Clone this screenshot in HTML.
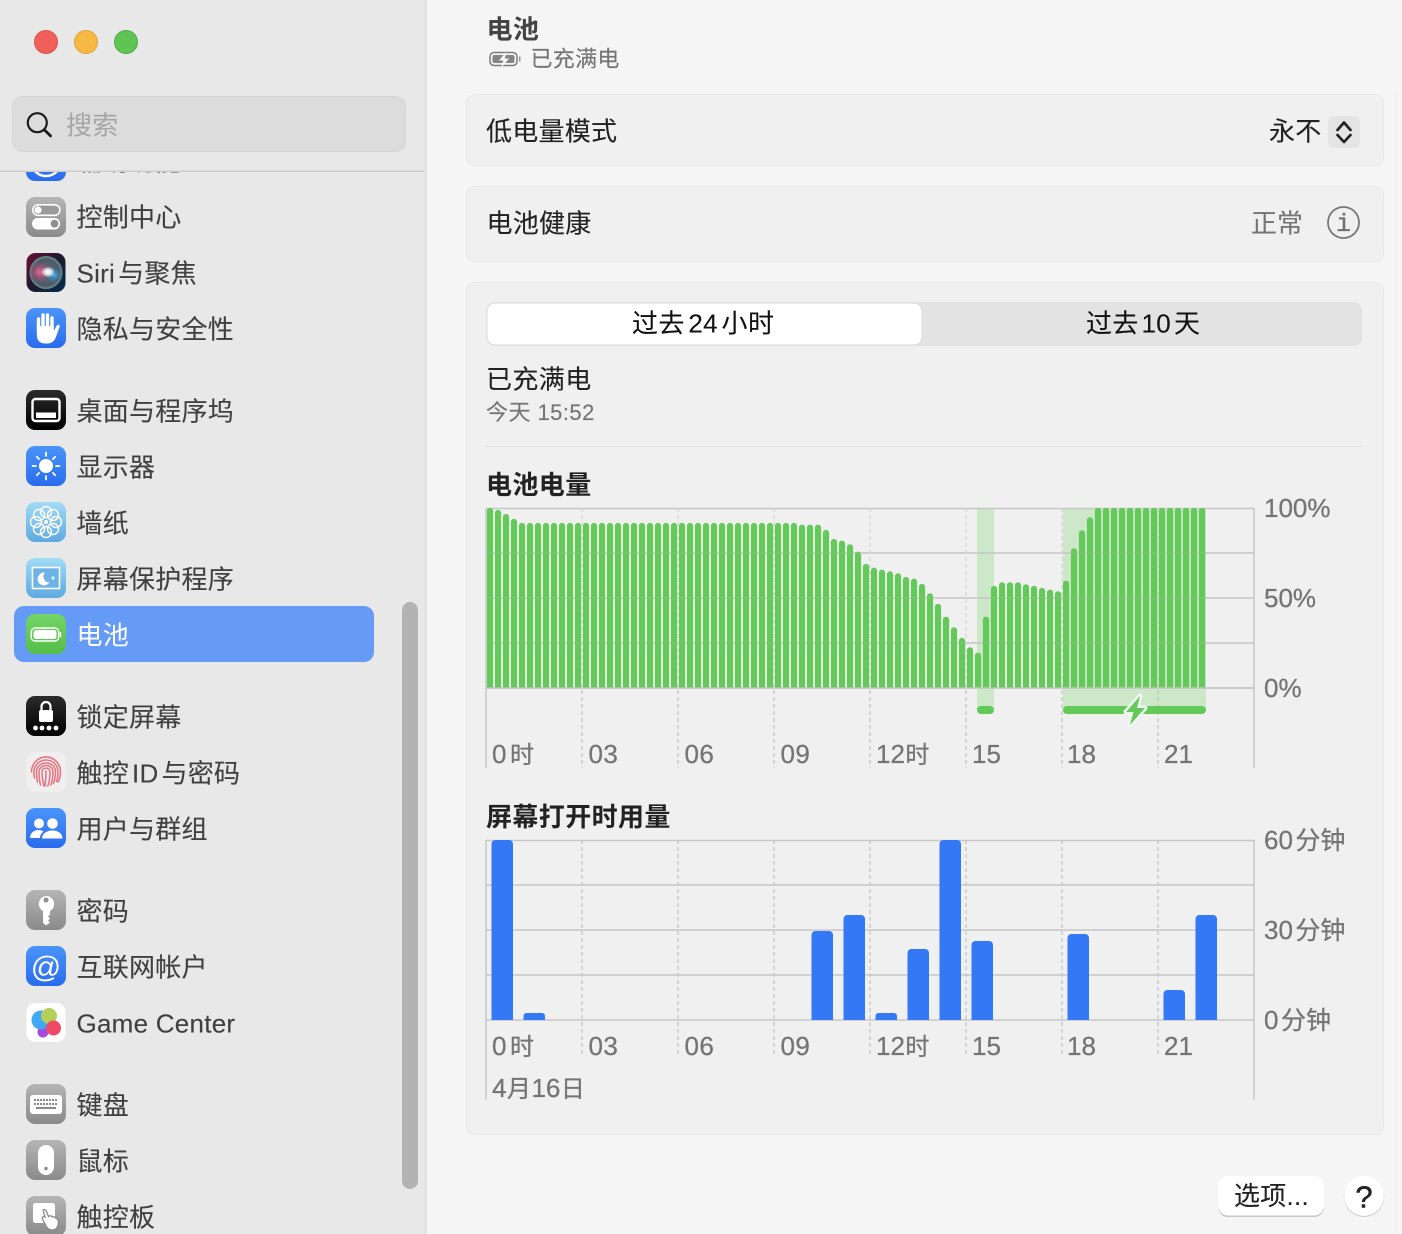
<!DOCTYPE html>
<html lang="zh-CN">
<head>
<meta charset="utf-8">
<title>电池</title>
<style>
html,body{margin:0;padding:0;background:#f5f5f5;width:1402px;height:1234px;overflow:hidden}
svg{display:block;font-family:"Liberation Sans","Noto Sans CJK SC",sans-serif}
text{font-size:26px}
.s{fill:#404040;stroke:#404040;stroke-width:.12;letter-spacing:.25px}
.m{fill:#222;stroke:#222;stroke-width:.12;letter-spacing:.25px}
.g{fill:#757575;stroke:#757575;stroke-width:.3}
.n{letter-spacing:.4px}
.c{font-size:24px}
.k{font-size:25px}
.b{font-weight:700;letter-spacing:.4px}
.sm{font-size:22px;letter-spacing:.3px;stroke-width:.15}
</style>
</head>
<body>
<svg width="1402" height="1234" viewBox="0 0 1402 1234" xmlns="http://www.w3.org/2000/svg">
<defs>
<linearGradient id="gray" x1="0" y1="0" x2="0" y2="1"><stop offset="0" stop-color="#b5b5b5"/><stop offset="1" stop-color="#8a8a8a"/></linearGradient>
<linearGradient id="blue" x1="0" y1="0" x2="0" y2="1"><stop offset="0" stop-color="#4a94f9"/><stop offset="1" stop-color="#2a6bee"/></linearGradient>
<linearGradient id="sky" x1="0" y1="0" x2="0" y2="1"><stop offset="0" stop-color="#a2dcf6"/><stop offset="1" stop-color="#5ea9e0"/></linearGradient>
<linearGradient id="grn" x1="0" y1="0" x2="0" y2="1"><stop offset="0" stop-color="#74d566"/><stop offset="1" stop-color="#55bd49"/></linearGradient>
<linearGradient id="blk" x1="0" y1="0" x2="0" y2="1"><stop offset="0" stop-color="#2b2b2b"/><stop offset="1" stop-color="#000"/></linearGradient>
<linearGradient id="siri" x1="0" y1="0" x2="1" y2="1"><stop offset="0" stop-color="#6b0f35"/><stop offset=".5" stop-color="#1c1a2e"/><stop offset="1" stop-color="#06304f"/></linearGradient>
<radialGradient id="orb" cx=".5" cy=".5" r=".5"><stop offset="0" stop-color="#6c6c80"/><stop offset=".8" stop-color="#4a5a66"/><stop offset="1" stop-color="#71908a"/></radialGradient>
<radialGradient id="pk" cx=".5" cy=".5" r=".5"><stop offset="0" stop-color="#f06a9c" stop-opacity=".95"/><stop offset="1" stop-color="#b83068" stop-opacity="0"/></radialGradient>
<radialGradient id="bl" cx=".5" cy=".5" r=".5"><stop offset="0" stop-color="#49b4ee" stop-opacity=".95"/><stop offset="1" stop-color="#2a6fa8" stop-opacity="0"/></radialGradient>
<radialGradient id="wh" cx=".5" cy=".5" r=".5"><stop offset="0" stop-color="#fff"/><stop offset=".5" stop-color="#fff" stop-opacity=".8"/><stop offset="1" stop-color="#fff" stop-opacity="0"/></radialGradient>
<clipPath id="c1"><rect x="486" y="508" width="768" height="180"/></clipPath>
<clipPath id="listclip"><rect x="0" y="172" width="425" height="1062"/></clipPath>
</defs>

<!-- backgrounds -->
<rect width="1402" height="1234" fill="#f5f5f5"/>
<rect width="425" height="1234" fill="#e8e8e8"/>
<rect x="425" y="0" width="2" height="1234" fill="#e0e0e0"/>
<rect x="1395" y="94" width="1" height="1140" fill="#ececec"/>

<!-- sidebar list -->
<g clip-path="url(#listclip)">
<rect x="14" y="606" width="360" height="56" rx="10" fill="#659af6"/>

<!-- accessibility (clipped) -->
<rect x="26" y="141" width="40" height="40" rx="9" fill="url(#blue)"/>
<circle cx="46" cy="161" r="15" fill="none" stroke="#fff" stroke-width="2.5"/>
<text x="76.500" y="170.500" class="s">辅助功能</text>

<!-- control centre -->
<rect x="26" y="197" width="40" height="40" rx="9" fill="url(#gray)"/>
<rect x="32.800" y="204.800" width="27" height="10.500" rx="5.200" fill="#9a9a9a" stroke="#fff" stroke-width="1.600"/>
<circle cx="38" cy="210" r="3.600" fill="#fff"/>
<rect x="32" y="218" width="28" height="11.500" rx="5.700" fill="#fff"/>
<circle cx="54.500" cy="223.700" r="3.900" fill="#8e8e8e"/>
<text x="76.500" y="226.500" class="s">控制中心</text>

<!-- siri -->
<rect x="26.500" y="253" width="39" height="39" rx="9" fill="url(#siri)"/>
<circle cx="46" cy="272.500" r="16.500" fill="url(#orb)"/>
<ellipse cx="39.500" cy="272" rx="11" ry="11" fill="url(#pk)"/>
<ellipse cx="54" cy="275" rx="9.500" ry="9" fill="url(#bl)"/>
<ellipse cx="48" cy="272" rx="7" ry="5.500" fill="url(#wh)"/>
<text x="76.500" y="282.500" class="s">Siri<tspan dx="3">与聚焦</tspan></text>

<!-- privacy hand -->
<rect x="26" y="308" width="40" height="40" rx="9" fill="url(#blue)"/>
<path d="M38.500 328V319M43 327V315M47.500 327V315M52 328V318" stroke="#fff" stroke-width="3.400" stroke-linecap="round" fill="none"/>
<path d="M36.800 326h17v5l3-5.500c1-1.700 3.500-.5 2.800 1.400l-3.500 9.600c-1.500 4.500-4.500 7-9 7h-2c-5.500 0-8.300-3.500-8.300-9z" fill="#fff"/>
<text x="76.500" y="338.500" class="s">隐私与安全性</text>

<!-- desktop & dock -->
<rect x="26" y="390" width="40" height="40" rx="9" fill="url(#blk)"/>
<rect x="32.500" y="399" width="27" height="22" rx="3" fill="none" stroke="#fff" stroke-width="2.400"/>
<rect x="36" y="412.500" width="20" height="5.500" fill="#fff"/>
<text x="76.500" y="420.500" class="s">桌面与程序坞</text>

<!-- displays -->
<rect x="26" y="446" width="40" height="40" rx="9" fill="url(#blue)"/>
<circle cx="46" cy="466" r="7" fill="#fff"/>
<path d="M46 452.500v3.500M46 476v3.500M32.500 466h3.500M56 466h3.500M36.800 456.800l2.200 2.200M53 473l2.200 2.200M36.800 475.200l2.200-2.200M53 459l2.200-2.200" stroke="#fff" stroke-width="1.800" stroke-linecap="round"/>
<text x="76.500" y="476.500" class="s">显示器</text>

<!-- wallpaper -->
<rect x="26" y="502" width="40" height="40" rx="9" fill="url(#sky)"/>
<g fill="none" stroke="#fff" stroke-width="1.500">
<circle cx="46" cy="512" r="5.500"/><circle cx="46" cy="532" r="5.500"/><circle cx="36" cy="522" r="5.500"/><circle cx="56" cy="522" r="5.500"/>
<circle cx="39" cy="515" r="5.500"/><circle cx="53" cy="515" r="5.500"/><circle cx="39" cy="529" r="5.500"/><circle cx="53" cy="529" r="5.500"/>
</g>
<circle cx="46" cy="522" r="2" fill="#fff"/>
<text x="76.500" y="532.500" class="s">墙纸</text>

<!-- screensaver -->
<rect x="26" y="558" width="40" height="40" rx="9" fill="url(#sky)"/>
<rect x="32.500" y="567.500" width="27" height="21" fill="#6db3e6" stroke="#fff" stroke-width="1.600"/>
<path d="M45 572.500a6.500 6.500 0 1 0 4.500 10a6 6 0 0 1-4.500-10z" fill="#fff"/>
<path d="M53 576v4M51 578h4" stroke="#fff" stroke-width="1"/>
<text x="76.500" y="588.500" class="s">屏幕保护程序</text>

<!-- battery -->
<rect x="26" y="614" width="40" height="40" rx="9" fill="url(#grn)"/>
<rect x="31.200" y="628" width="27.500" height="13" rx="4" fill="none" stroke="#fff" stroke-width="1.400"/>
<rect x="33.500" y="630" width="23" height="9" rx="2.500" fill="#fff"/>
<path d="M60.500 632.500v4" stroke="#fff" stroke-width="1.500" stroke-linecap="round"/>
<text x="76.500" y="644.500" fill="#fff" style="letter-spacing:.25px">电池</text>

<!-- lock screen -->
<rect x="26" y="696" width="40" height="40" rx="9" fill="url(#blk)"/>
<path d="M41.500 711v-4.500a4.500 4.500 0 0 1 9 0V711" fill="none" stroke="#fff" stroke-width="2.200"/>
<rect x="39" y="710" width="14" height="12" rx="2" fill="#fff"/>
<circle cx="35.500" cy="728" r="2.400" fill="#fff"/><circle cx="42" cy="728" r="2.400" fill="#fff"/><circle cx="49" cy="728" r="2.400" fill="#fff"/><circle cx="56" cy="728" r="2.400" fill="#fff"/>
<text x="76.500" y="726.500" class="s">锁定屏幕</text>

<!-- touch id -->
<rect x="26" y="752" width="40" height="40" rx="9" fill="#f0eeee"/>
<g fill="none" stroke="#e8707f" stroke-width="1.500" stroke-linecap="round">
<path d="M31.500 772c0-8 6-15 14.500-15s14.500 7 14.500 15c0 5-1 8-2.500 10"/>
<path d="M34.500 778c-.5-2-.5-4-.5-6c0-6.500 5-12 12-12s12 5.500 12 12c0 3.500-.5 7-1.500 9.500"/>
<path d="M37.500 782c-.7-3-1-6-1-10c0-5 4-9 9.500-9s9.500 4 9.500 9c0 4-.7 8-2 11.500"/>
<path d="M40.500 785c-1-4-1.500-8-1.500-13c0-3.500 3-6.500 7-6.500s7 3 7 6.500c0 4.500-.7 9-2.200 13"/>
<path d="M44 786c-1.200-4.500-2-9-2-14c0-2.200 1.800-4 4-4s4 1.800 4 4c0 5-.7 10-2.200 14"/>
<path d="M46 771c0 5-.3 10-1 15"/>
</g>
<text x="76.500" y="782.500" class="s">触控<tspan dx="3">ID</tspan><tspan dx="3">与密码</tspan></text>

<!-- users -->
<rect x="26" y="808" width="40" height="40" rx="9" fill="url(#blue)"/>
<circle cx="39" cy="823.500" r="5" fill="#fff"/><circle cx="52.500" cy="823.500" r="5.300" fill="#fff"/>
<path d="M30 838c0-5 4-8 8.500-8c2 0 3.500.5 5 1.500c-2 1.500-3.500 3.800-3.500 6.500z" fill="#fff"/>
<path d="M42 838.500c0-5 5-8 10.500-8s10 3 10 8z" fill="#fff"/>
<text x="76.500" y="838.500" class="s">用户与群组</text>

<!-- passwords -->
<rect x="26" y="890" width="40" height="40" rx="9" fill="url(#gray)"/>
<path d="M46 896a8 8 0 0 1 4 15v3.500l-2 2 2 2-2 2 2 2-4 3-3-2.500V911a8 8 0 0 1 3-15z" fill="#fff"/>
<circle cx="46" cy="900" r="2.500" fill="#8f8f8f"/>
<text x="76.500" y="920.500" class="s">密码</text>

<!-- internet accounts -->
<rect x="26" y="946" width="40" height="40" rx="9" fill="url(#blue)"/>
<text x="46" y="977" fill="#fff" text-anchor="middle" style="font-size:30px">@</text>
<text x="76.500" y="976.500" class="s">互联网帐户</text>

<!-- game center -->
<rect x="26.500" y="1003" width="39" height="39" rx="9" fill="#fff"/>
<circle cx="43" cy="1032" r="5.500" fill="#a44ae0"/>
<circle cx="41" cy="1020" r="9.500" fill="#3fa9f5"/>
<circle cx="49" cy="1016" r="8" fill="#b4cf58"/>
<circle cx="53.500" cy="1028" r="7.500" fill="#ee4a66"/>
<text x="76.500" y="1032.500" class="s">Game Center</text>

<!-- keyboard -->
<rect x="26" y="1084" width="40" height="40" rx="9" fill="url(#gray)"/>
<rect x="30" y="1095" width="32" height="19" rx="3" fill="#fff"/>
<path d="M34 1100h24M34 1104h24" stroke="#8a8a8a" stroke-width="2" stroke-dasharray="2 1"/>
<path d="M36 1108h20" stroke="#8a8a8a" stroke-width="2"/>
<text x="76.500" y="1114.500" class="s">键盘</text>

<!-- mouse -->
<rect x="26" y="1140" width="40" height="40" rx="9" fill="url(#gray)"/>
<rect x="38" y="1145" width="16" height="30" rx="8" fill="#fff"/>
<circle cx="46" cy="1168.500" r="1.700" fill="#8a8a8a"/>
<text x="76.500" y="1170.500" class="s">鼠标</text>

<!-- trackpad -->
<rect x="26" y="1196" width="40" height="40" rx="9" fill="url(#gray)"/>
<rect x="33" y="1203" width="22" height="20" rx="2.500" fill="#fff"/>
<path d="M43 1210c2-1 3 0 3.500 1.500l2 5c1-1 3-1 4 .5c1-.5 2.500 0 3 1c2 .5 3 2 3 4c0 4-2 8-6 8c-4 0-6-2-7-5l-3-6c-1-2 1-3 2.500-2z" fill="#fff" stroke="#8a8a8a" stroke-width="1.300"/>
<text x="76.500" y="1226.500" class="s">触控板</text>
</g>

<!-- sidebar scrollbar -->
<rect x="402" y="602" width="16" height="587" rx="8" fill="#b3b3b3"/>

<!-- sidebar header -->
<rect x="0" y="0" width="425" height="171" fill="#e8e8e8"/>
<rect x="0" y="170.500" width="424" height="1.500" fill="#cdcdcd"/>
<circle cx="46" cy="42" r="11.500" fill="#f0605a" stroke="#d9534d"/>
<circle cx="86" cy="42" r="11.500" fill="#f6b944" stroke="#dfa53a"/>
<circle cx="126" cy="42" r="11.500" fill="#5fc454" stroke="#50ad47"/>
<rect x="12.500" y="96.500" width="393" height="55" rx="10" fill="#dcdcdc" stroke="#d6d6d6"/>
<circle cx="37.300" cy="122.700" r="9.500" fill="none" stroke="#1a1a1a" stroke-width="2.200"/>
<path d="M44.300 129.700l6.200 6.200" stroke="#1a1a1a" stroke-width="2.800" stroke-linecap="round"/>
<text x="66" y="134.500" fill="#a6a6a6" style="letter-spacing:.3px">搜索</text>

<!-- header -->
<text x="486.500" y="38.500" class="b" fill="#444">电池</text>
<rect x="490" y="52.500" width="27" height="13" rx="4" fill="none" stroke="#7d7d7d" stroke-width="1.500"/>
<rect x="492.500" y="55" width="22" height="8" rx="2" fill="#858585"/>
<path d="M506 53l-6 7h4l-2 6 6-7h-4z" fill="#f5f5f5" stroke="#f5f5f5" stroke-width="1"/>
<path d="M519.800 57v4" stroke="#7d7d7d" stroke-width="1.200" stroke-linecap="round"/>
<text x="530.500" y="66.500" class="g sm">已充满电</text>

<!-- panels -->
<rect x="466.500" y="94.500" width="917" height="71" rx="8" fill="#f0f0f0" stroke="#e8e8e8"/>
<rect x="466.500" y="186.500" width="917" height="75" rx="8" fill="#f0f0f0" stroke="#e8e8e8"/>
<rect x="466.500" y="282.500" width="917" height="852" rx="8" fill="#f0f0f0" stroke="#e8e8e8"/>

<text x="486" y="140.500" class="m">低电量模式</text>
<text x="1269" y="140.500" class="m">永不</text>
<rect x="1328" y="116" width="32" height="32" rx="6" fill="#e4e4e4"/>
<path d="M1337.500 130l6.500-7.500 6.500 7.500M1337.500 135l6.500 7 6.500-7" fill="none" stroke="#222" stroke-width="2.700" stroke-linecap="round" stroke-linejoin="round"/>

<text x="486.500" y="232.500" class="m">电池健康</text>
<text x="1251" y="232.500" class="g" style="stroke-width:.12">正常</text>
<circle cx="1343.500" cy="222.500" r="15.500" fill="none" stroke="#777" stroke-width="1.800"/>
<text x="1343.500" y="231" fill="#6f6f6f" stroke="#6f6f6f" stroke-width=".2" text-anchor="middle" style="font-family:'Liberation Mono',monospace;font-size:25px">i</text>

<!-- segmented -->
<rect x="487" y="302" width="875" height="44" rx="8" fill="#e3e3e3"/>
<rect x="487" y="303" width="435" height="42" rx="8" fill="#fff" stroke="#d4d4d4" stroke-width=".8"/>
<text x="632" y="332.500" class="m" style="fill:#111;letter-spacing:.4px">过去<tspan dx="3.500">24</tspan><tspan dx="3.500">小时</tspan></text>
<text x="1086" y="332.500" class="m" style="fill:#111;letter-spacing:.25px">过去<tspan dx="3">10</tspan><tspan dx="3">天</tspan></text>

<text x="486" y="388.500" class="m" style="letter-spacing:.4px">已充满电</text>
<text x="486" y="420" class="g sm" style="letter-spacing:.45px">今天 15:52</text>
<rect x="486" y="446" width="877" height="1" fill="#e1e1e1"/>

<text x="486" y="494" class="b" fill="#222">电池电量</text>

<!-- chart 1: grid under -->
<rect x="977" y="508" width="17" height="202" fill="#cde7c9"/>
<rect x="1063" y="508" width="143" height="202" fill="#cde7c9"/>
<path d="M486 508.500H1254M486 553H1254M486 598H1254M486 643H1254M486 688H1254M486 508V768M1254 508V768" stroke="#c6c6c6" stroke-width="1.400" fill="none"/>
<path d="M582 508V768M678 508V768M774 508V768M870 508V768M966 508V768M1062 508V768M1158 508V768" stroke="#c2c2c2" stroke-width="1.200" stroke-dasharray="4 3" fill="none"/>

<!-- chart 1: bars -->
<g clip-path="url(#c1)">
<path fill="none" stroke="#63c958" stroke-width="6.200" stroke-linecap="round" d="M490 700V511M498 700V513M506 700V517M514 700V522M522 700V526M530 700V526M538 700V526M546 700V526M554 700V526M562 700V526M570 700V526M578 700V526M586 700V526M594 700V526M602 700V526M610 700V526M618 700V526M626 700V526M634 700V526M642 700V526M650 700V526M658 700V526M666 700V526M674 700V526M682 700V526M690 700V526M698 700V526M706 700V526M714 700V526M722 700V526M730 700V526M738 700V526M746 700V526M754 700V526M762 700V526M770 700V526M778 700V526M786 700V526M794 700V526M802 700V527.700M810 700V527.700M818 700V527.700M826 700V533M834 700V542M842 700V543.700M850 700V547.300M858 700V554.700M866 700V567M874 700V570.700M882 700V572.700M890 700V574.300M898 700V576.300M906 700V580M914 700V581.700M922 700V587M930 700V596.300M938 700V607M946 700V619.700M954 700V630.300M962 700V641M970 700V650.300M978 700V655.700M986 700V619.700M994 700V589M1002 700V585.300M1010 700V585.300M1018 700V585.300M1026 700V587.300M1034 700V589M1042 700V591M1050 700V592.700M1058 700V594.300M1066 700V583.700M1074 700V551.300M1082 700V533.300M1090 700V520.300M1098 700V511M1106 700V511M1114 700V511M1122 700V511M1130 700V511M1138 700V511M1146 700V511M1154 700V511M1162 700V511M1170 700V511M1178 700V511M1186 700V511M1194 700V511M1202 700V511"/>
<path d="M486 553H1254M486 598H1254M486 643H1254" stroke="#c6c6c6" stroke-width="1.400" opacity=".18"/>
<path d="M582 508V688M678 508V688M774 508V688M870 508V688M966 508V688M1062 508V688M1158 508V688" stroke="#fff" stroke-width="1" stroke-dasharray="4 3" opacity=".3"/>
</g>
<rect x="486" y="687.300" width="768" height="1.400" fill="#c6c6c6"/>

<!-- charging bars -->
<rect x="977" y="706" width="17" height="8" rx="4" fill="#63c958"/>
<rect x="1063" y="706" width="143" height="8" rx="4" fill="#63c958"/>
<path d="M1140 696L1126 712h7.500L1130 725L1145 708h-8z" fill="#63c958" stroke="#f2f8f1" stroke-width="5" stroke-linejoin="round" paint-order="stroke"/>

<!-- chart 1 labels -->
<text x="492" y="763" class="g">0<tspan dx="3.500" class="c">时</tspan></text>
<text x="588.500" y="763" class="g n">03</text>
<text x="684.500" y="763" class="g n">06</text>
<text x="780.500" y="763" class="g n">09</text>
<text x="876" y="763" class="g">12<tspan dx=".5" class="c">时</tspan></text>
<text x="972" y="763" class="g">15</text>
<text x="1067" y="763" class="g">18</text>
<text x="1164" y="763" class="g">21</text>
<text x="1264" y="517" class="g">100%</text>
<text x="1264" y="607" class="g">50%</text>
<text x="1264" y="697" class="g">0%</text>

<text x="486" y="826" class="b" fill="#222">屏幕打开时用量</text>

<!-- chart 2 grid -->
<path d="M486 840.500H1254M486 885H1254M486 930H1254M486 975H1254M486 1020H1254M486 840V1100M1254 840V1100" stroke="#c6c6c6" stroke-width="1.400" fill="none"/>
<path d="M582 840V1057M678 840V1057M774 840V1057M870 840V1057M966 840V1057M1062 840V1057M1158 840V1057" stroke="#c2c2c2" stroke-width="1.200" stroke-dasharray="4 3" fill="none"/>

<!-- chart 2 bars -->
<g fill="#3478f6">
<path d="M491.500 1020V844a4 4 0 0 1 4-4h13.500a4 4 0 0 1 4 4V1020z"/>
<path d="M523.500 1020V1016a3 3 0 0 1 3-3h15.500a3 3 0 0 1 3 3V1020z"/>
<path d="M811.500 1020V935a4 4 0 0 1 4-4h13.500a4 4 0 0 1 4 4V1020z"/>
<path d="M843.500 1020V919a4 4 0 0 1 4-4h13.500a4 4 0 0 1 4 4V1020z"/>
<path d="M875.500 1020V1016a3 3 0 0 1 3-3h15.500a3 3 0 0 1 3 3V1020z"/>
<path d="M907.500 1020V953a4 4 0 0 1 4-4h13.500a4 4 0 0 1 4 4V1020z"/>
<path d="M939.500 1020V844a4 4 0 0 1 4-4h13.500a4 4 0 0 1 4 4V1020z"/>
<path d="M971.500 1020V945a4 4 0 0 1 4-4h13.500a4 4 0 0 1 4 4V1020z"/>
<path d="M1067.500 1020V938a4 4 0 0 1 4-4h13.500a4 4 0 0 1 4 4V1020z"/>
<path d="M1163.500 1020V994a4 4 0 0 1 4-4h13.500a4 4 0 0 1 4 4V1020z"/>
<path d="M1195.500 1020V919a4 4 0 0 1 4-4h13.500a4 4 0 0 1 4 4V1020z"/>
</g>

<!-- chart 2 labels -->
<text x="492" y="1055" class="g">0<tspan dx="3.500" class="c">时</tspan></text>
<text x="588.500" y="1055" class="g n">03</text>
<text x="684.500" y="1055" class="g n">06</text>
<text x="780.500" y="1055" class="g n">09</text>
<text x="876" y="1055" class="g">12<tspan dx=".5" class="c">时</tspan></text>
<text x="972" y="1055" class="g">15</text>
<text x="1067" y="1055" class="g">18</text>
<text x="1164" y="1055" class="g">21</text>
<text x="492" y="1097" class="g">4<tspan dx=".5" class="c">月</tspan><tspan dx=".5">16</tspan><tspan dx=".5" class="c">日</tspan></text>
<text x="1264" y="849" class="g">60<tspan dx="2.500" class="k">分钟</tspan></text>
<text x="1264" y="939" class="g">30<tspan dx="2.500" class="k">分钟</tspan></text>
<text x="1264" y="1029" class="g">0<tspan dx="2.500" class="k">分钟</tspan></text>

<!-- buttons -->
<rect x="1218" y="1176.500" width="106" height="40.500" rx="10" fill="#bdbdbd" opacity=".85"/>
<rect x="1218" y="1176" width="106" height="39.500" rx="10" fill="#fff"/>
<text x="1234" y="1205" class="m">选项...</text>
<circle cx="1364" cy="1196.700" r="20.200" fill="#bdbdbd" opacity=".85"/>
<circle cx="1364" cy="1196" r="20" fill="#fff"/>
<text x="1364" y="1207.500" fill="#222" stroke="#222" stroke-width=".5" text-anchor="middle" style="font-size:31px">?</text>
</svg>
</body>
</html>
